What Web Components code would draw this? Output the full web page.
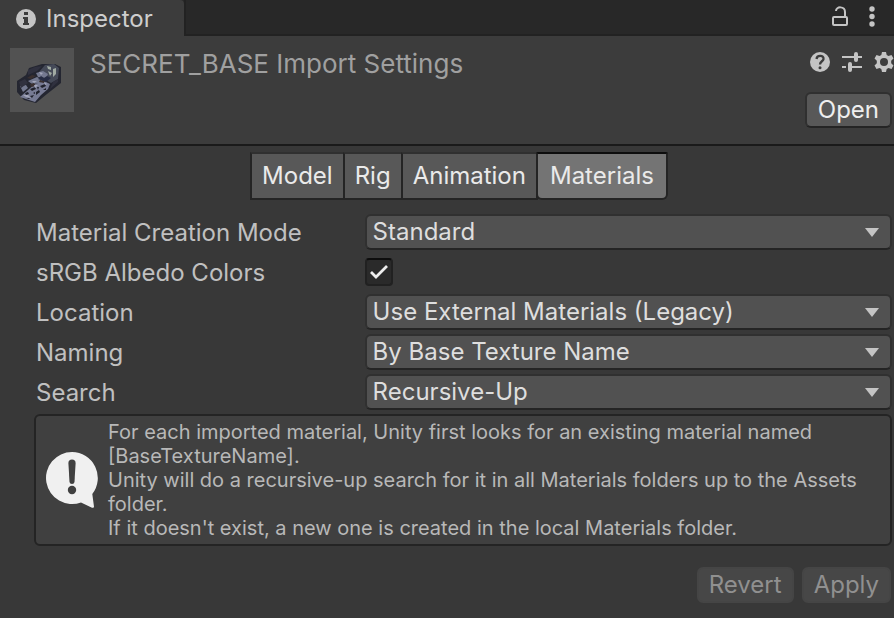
<!DOCTYPE html>
<html lang="en">
<head>
<meta charset="utf-8">
<meta name="viewport" content="width=device-width, initial-scale=1">
<title>Inspector</title>
<style>
html{background:#383838}
body{margin:0;font:24px/32px Inter,"Liberation Sans",sans-serif;color:#c0c0c0}
</style>
</head>
<body>
<inspector-panel></inspector-panel>
<script>
const define = (name, html, setup) => customElements.define(name, class extends HTMLElement {
  connectedCallback() {
    if (this.shadowRoot) return;
    const t = document.createElement('template');
    t.innerHTML = html;
    this.attachShadow({mode: 'open'}).append(t.content.cloneNode(true));
    if (setup) setup(this, this.shadowRoot);
  }
});

define('window-tabs', `
<style>
:host{display:flex;height:36px;background:#282828}
*{box-sizing:border-box}
button{font:inherit;color:inherit;background:none;border:0;padding:0;margin:0}
.tab{display:flex;align-items:center;gap:10px;width:184px;padding:2px 0 0 16px;background:#3c3c3c;color:#cecece;border-radius:0 4px 0 0}
.rest{flex:1;display:flex;justify-content:flex-end;align-items:center;gap:12px;padding-right:12px;border-left:2px solid #222;border-bottom:2px solid #222}
.rest button,svg{display:block}
</style>
<button class="tab" role="tab" aria-selected="true">
<svg width="20" height="20" viewBox="0 0 20 20"><circle cx="10" cy="10" r="10" fill="#c4c4c4"/><path d="M8 3h4v3H8zM7 8h5v6h1v2H7v-2h1v-4H7z" fill="#3c3c3c"/></svg>
<span>Inspector</span></button>
<div class="rest">
<button aria-label="Lock"><svg width="20" height="22" viewBox="0 0 20 22" fill="none" stroke="#c4c4c4" stroke-width="2"><rect x="3" y="11" width="14" height="8" rx="1"/><path d="M6 5C6 0 15 0 15 6v5"/></svg></button>
<button aria-label="Menu"><svg width="20" height="22" viewBox="0 0 20 22" fill="#c4c4c4"><circle cx="10" cy="3" r="2.700"/><circle cx="10" cy="10.500" r="2.700"/><circle cx="10" cy="18" r="2.700"/></svg></button>
</div>`);

define('push-button', `
<style>
:host{display:block}
button{box-sizing:border-box;display:block;height:36px;font:inherit;line-height:32px;color:#eee;padding:0 11px;background:#585858;border:2px solid #303030;border-bottom-color:#242424;border-radius:6px}
button:disabled{color:#909090;background:#474747;border-color:#454545;padding:0 10px}
</style>
<button><slot></slot></button>`, (host, root) => {
  root.querySelector('button').disabled = host.hasAttribute('disabled');
});

define('asset-header', `
<style>
:host{display:grid;grid-template-columns:64px 1fr auto;column-gap:16px;align-items:start;height:110px;box-sizing:border-box;padding:12px 2px 0 10px;background:#3c3c3c;border-bottom:2px solid #1a1a1a}
.thumb{display:block;background:#525252}
h1{font-size:26px;line-height:32px;font-weight:inherit;color:#a0a0a0;margin:0}
.side{display:grid;justify-items:end;gap:20px}
.icons{display:flex;gap:12px;padding-top:4px;margin-right:-2px}
.icons button{display:block;border:0;background:none;padding:0}
.icons svg{display:block}
</style>
<svg class="thumb" width="64" height="64" viewBox="0 0 64 64" role="img" aria-label="Model preview">
<path d="M7 33l9-6 3-7 13-4h13l6 3v16L37 46l-11 9-12-3-7-8z" fill="#242631"/>
<path d="M35 17l9-1 5 4-1 11-7 4-7-4-5-7z" fill="#454a58"/>
<path d="M10 49l8-7 7-6 9-3 6 3-2 5-7 6-6 7z" fill="#777b94"/>
<path d="M18 33l9-4 6 3-3 3-8 1zM26 25l7-2 5 3-2 4-8-1zM10 38l6-1 2 3-5 4z" fill="#747990"/>
<path d="M37 18l4 1v3l-3-1zM43 21l3-1v6l-3 3zM38 23l4 2-2 3z" fill="#a0aaa2"/>
<path d="M17 30l5-3 4 1-5 3zM20 36l4-1 2 3-5 1zM30 32l5 1-1 2-5-1z" fill="#3a3030"/>
<path d="M18 22l7-3 7-1-5 5-9 4zM43 34l5-3v3l-8 7zM9 34l6-3 3 4-7 5z" fill="#30313f"/>
<path d="M15 45l3-1 1 2-3 1zM20 41l5-2 1 2-4 2zM26 44l3-2 1 2-4 3zM20 48l4-1-2 3zM30 38l5-2 1 2-4 2zM23 45l2-1 0 2zM33 42l3-2 0 2zM16 50l4 0-1 1zM27 39l2 0-1 3z" fill="#20222d"/>
<path d="M13 47l5 0 3 3-5-1zM24 37l4 0-3 3zM34 34l3 2-2 1zM22 33l5 0-3 2zM29 24l4 1-2 2z" fill="#a2a5b9"/>
<path d="M28 31l3-3 3 2 3-2 4 2-5 4z" fill="#262c43"/>
</svg>
<h1><slot></slot></h1>
<div class="side">
<div class="icons">
<button aria-label="Help"><svg width="20" height="20" viewBox="0 0 20 20"><circle cx="10" cy="10" r="10" fill="#c4c4c4"/><path d="M6.500 7C7 2.500 14 3 13.500 7c-.3 2.300-3.500 2.400-3.500 5.500" fill="none" stroke="#3c3c3c" stroke-width="2.300"/><circle cx="10" cy="15.700" r="1.500" fill="#3c3c3c"/></svg></button>
<button aria-label="Presets"><svg width="20" height="20" viewBox="0 0 20 20" stroke="#c4c4c4" fill="none"><path d="M0 5h12M14 5h6M0 15h4M8 15h12" stroke-width="2"/><path d="M14 2v6M8 12v6" stroke-width="4" stroke-linecap="round"/></svg></button>
<button aria-label="Settings"><svg width="20" height="20" viewBox="0 0 20 20" fill="#c4c4c4"><path fill-rule="evenodd" d="M8 0h4l.7 3 1.800 1 3-1 2 3.500-2.300 2.200v2.600l2.300 2.200-2 3.500-3-1-1.800 1-.7 3H8l-.7-3-1.800-1-3 1-2-3.500 2.300-2.200V8.700L.5 6.500l2-3.500 3 1 1.800-1zM10 6a4 4 0 1 0 0 8 4 4 0 0 0 0-8z"/></svg></button>
</div>
<push-button>Open</push-button>
</div>`);

define('import-tabs', `
<style>
:host{display:flex;justify-content:center;padding-right:6px}
button{box-sizing:border-box;height:48px;font:inherit;color:#eaeaea;padding:0 10px;margin:0 0 0 -2px;background:#585858;border:2px solid #242424;border-top-color:#303030}
button:first-child{border-radius:6px 0 0 0;margin:0}
button[aria-selected=true]{padding:0 12px;background:#747474;border-top-color:#0d0d0d;border-radius:2px 2px 6px 6px}
</style>
<button role="tab">Model</button><button role="tab">Rig</button><button role="tab">Animation</button><button role="tab" aria-selected="true">Materials</button>`);

define('drop-down', `
<style>
:host{display:block;position:relative}
select{appearance:none;box-sizing:border-box;display:block;width:100%;height:36px;font:inherit;color:#dedede;background:#515151;border:2px solid #303030;border-bottom-color:#242424;border-radius:6px;padding:0 40px 2px 6px}
svg{position:absolute;right:13px;top:14px;pointer-events:none}
</style>
<select><option></option></select><svg width="14" height="9" viewBox="0 0 14 9"><path d="M0 0h14L7 9z" fill="#c4c4c4"/></svg>`, (host, root) => {
  root.querySelector('option').textContent = host.getAttribute('value');
  root.querySelector('select').setAttribute('aria-label', host.getAttribute('label'));
});

define('check-box', `
<style>
:host{display:block;position:relative}
input{appearance:none;box-sizing:border-box;display:block;width:28px;height:28px;margin:0;background:#2a2a2a;border:2px solid #212121;border-top-color:#0d0d0d;border-radius:4px}
svg{position:absolute;left:5px;top:7px;pointer-events:none;display:none}
input:checked+svg{display:block}
</style>
<input type="checkbox" checked><svg width="18" height="14" viewBox="0 0 18 14"><path d="M1 7l5 5L17 1" fill="none" stroke="#eee" stroke-width="2.800"/></svg>`, (host, root) => {
  root.querySelector('input').setAttribute('aria-label', host.getAttribute('label'));
});

define('property-row', `
<style>
:host{display:grid;grid-template-columns:minmax(0,5fr) minmax(0,8fr);column-gap:1px;align-items:center;min-height:40px}
span{padding:2px 0 0 2px;white-space:nowrap}
</style>
<span></span><slot></slot>`, (host, root) => {
  root.querySelector('span').textContent = host.getAttribute('label');
});

define('help-box', `
<style>
:host{display:grid;grid-template-columns:52px 1fr;column-gap:10px;align-items:center;padding:4px 10px;background:#404040;border:2px solid #242424;border-radius:6px;font-size:20px;line-height:24px;color:#b8b8b8}
svg{display:block}
</style>
<svg width="52" height="58" viewBox="0 0 52 58"><path d="M26 1a26 26 0 1 0 9 50.400L46 56.700q2 .6 2-1L46.300 43A26 26 0 0 0 26 1z" fill="#f0f0f0"/><path d="M22.400 12q0-3.500 3.600-3.500t3.600 3.500L28.500 31q-.3 2-2.500 2t-2.500-2z" fill="#404040"/><circle cx="26" cy="39" r="4.200" fill="#404040"/></svg>
<div><slot></slot></div>`);

define('inspector-panel', `
<style>
:host{display:block}
main{padding:6px 2px 0 34px}
.rows{padding:12px 0 2px}
p{margin:0}
footer{display:flex;justify-content:flex-end;gap:8px;padding:21px 1px 14px 0}
</style>
<window-tabs></window-tabs>
<asset-header>SECRET_BASE Import Settings</asset-header>
<main>
<import-tabs role="tablist"></import-tabs>
<div class="rows">
<property-row label="Material Creation Mode"><drop-down label="Material Creation Mode" value="Standard"></drop-down></property-row>
<property-row label="sRGB Albedo Colors"><check-box label="sRGB Albedo Colors"></check-box></property-row>
<property-row label="Location"><drop-down label="Location" value="Use External Materials (Legacy)"></drop-down></property-row>
<property-row label="Naming"><drop-down label="Naming" value="By Base Texture Name"></drop-down></property-row>
<property-row label="Search"><drop-down label="Search" value="Recursive-Up"></drop-down></property-row>
</div>
<help-box><p>For each imported material, Unity first looks for an existing material named [BaseTextureName].</p><p>Unity will do a recursive-up search for it in all Materials folders up to the Assets folder.</p><p>If it doesn't exist, a new one is created in the local Materials folder.</p></help-box>
<footer><push-button disabled>Revert</push-button><push-button disabled>Apply</push-button></footer>
</main>`);
</script>
</body>
</html>
